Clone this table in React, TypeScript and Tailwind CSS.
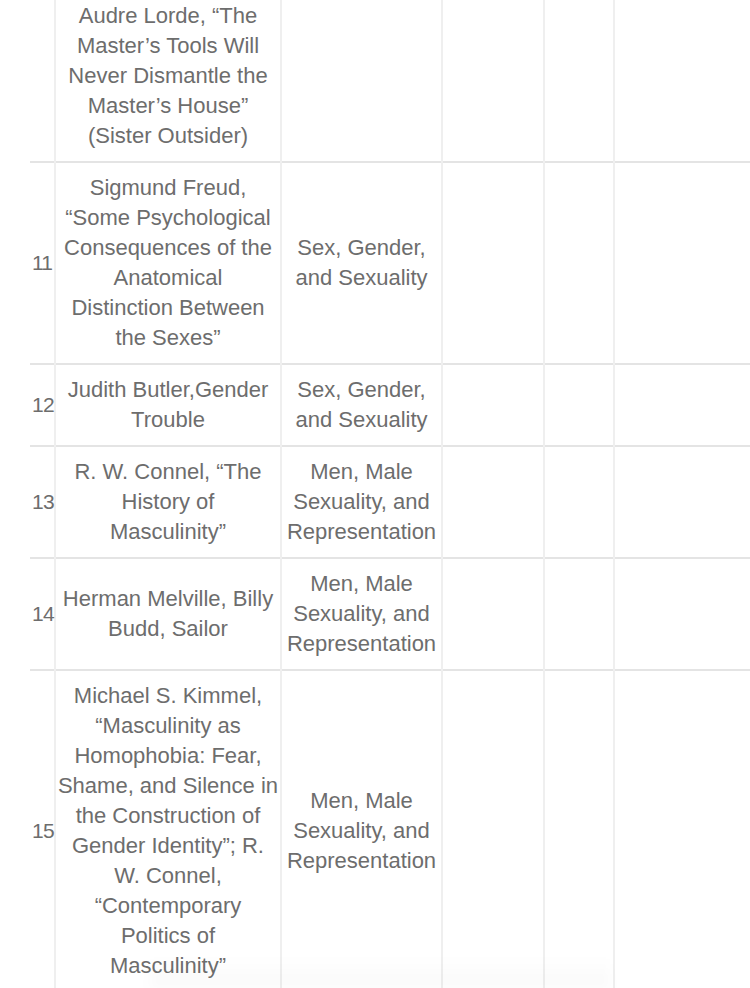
import React from 'react';

interface Row {
  num?: string;
  title: string[];
  topic: string[];
}

const rows: Row[] = [
  {
    title: ['Audre Lorde, “The', 'Master’s Tools Will', 'Never Dismantle the', 'Master’s House”', '(Sister Outsider)'],
    topic: [],
  },
  {
    num: '11',
    title: [
      'Sigmund Freud,',
      '“Some Psychological',
      'Consequences of the',
      'Anatomical',
      'Distinction Between',
      'the Sexes”',
    ],
    topic: ['Sex, Gender,', 'and Sexuality'],
  },
  {
    num: '12',
    title: ['Judith Butler,Gender', 'Trouble'],
    topic: ['Sex, Gender,', 'and Sexuality'],
  },
  {
    num: '13',
    title: ['R. W. Connel, “The', 'History of', 'Masculinity”'],
    topic: ['Men, Male', 'Sexuality, and', 'Representation'],
  },
  {
    num: '14',
    title: ['Herman Melville, Billy', 'Budd, Sailor'],
    topic: ['Men, Male', 'Sexuality, and', 'Representation'],
  },
  {
    num: '15',
    title: [
      'Michael S. Kimmel,',
      '“Masculinity as',
      'Homophobia: Fear,',
      'Shame, and Silence in',
      'the Construction of',
      'Gender Identity”; R.',
      'W. Connel,',
      '“Contemporary',
      'Politics of',
      'Masculinity”',
    ],
    topic: ['Men, Male', 'Sexuality, and', 'Representation'],
  },
];

function Lines({ lines }: { lines: string[] }) {
  return (
    <>
      {lines.map((l, i) => (
        <div key={i} className="whitespace-nowrap">
          {l}
        </div>
      ))}
    </>
  );
}

export default function App() {
  const cell = 'border-x-2 border-[#efefef] py-[10px] px-0 text-center align-middle';

  return (
    <div
      className="relative w-[750px] h-[988px] overflow-hidden bg-white text-[22px] leading-[30px] text-[#6d6d6d]"
      style={{ fontFamily: '"Liberation Sans", Arial, sans-serif' }}
    >
      <div className="pl-[30px] -mt-[9px]">
        <table className="w-[760px] table-fixed border-collapse">
          <colgroup>
            <col className="w-[25px]" />
            <col className="w-[226px]" />
            <col className="w-[161px]" />
            <col className="w-[102px]" />
            <col className="w-[70px]" />
            <col />
          </colgroup>
          <tbody>
            {rows.map((r, i) => (
              <tr key={i} className="border-b-2 border-[#e4e4e4]">
                <td className="border-r-2 border-[#efefef] py-[10px] pl-[2px] text-left align-middle text-[21px] tracking-[-0.8px]">{r.num}</td>
                <td className={cell}>
                  <Lines lines={r.title} />
                </td>
                <td className={cell}>
                  <Lines lines={r.topic} />
                </td>
                <td className={cell} />
                <td className={cell} />
                <td className="border-l-2 border-[#efefef]" />
              </tr>
            ))}
          </tbody>
        </table>
      </div>
      <div className="pointer-events-none absolute bottom-0 left-[150px] h-[32px] w-[460px] bg-gradient-to-t from-black/[0.025] to-transparent blur-[6px]" />
    </div>
  );
}
